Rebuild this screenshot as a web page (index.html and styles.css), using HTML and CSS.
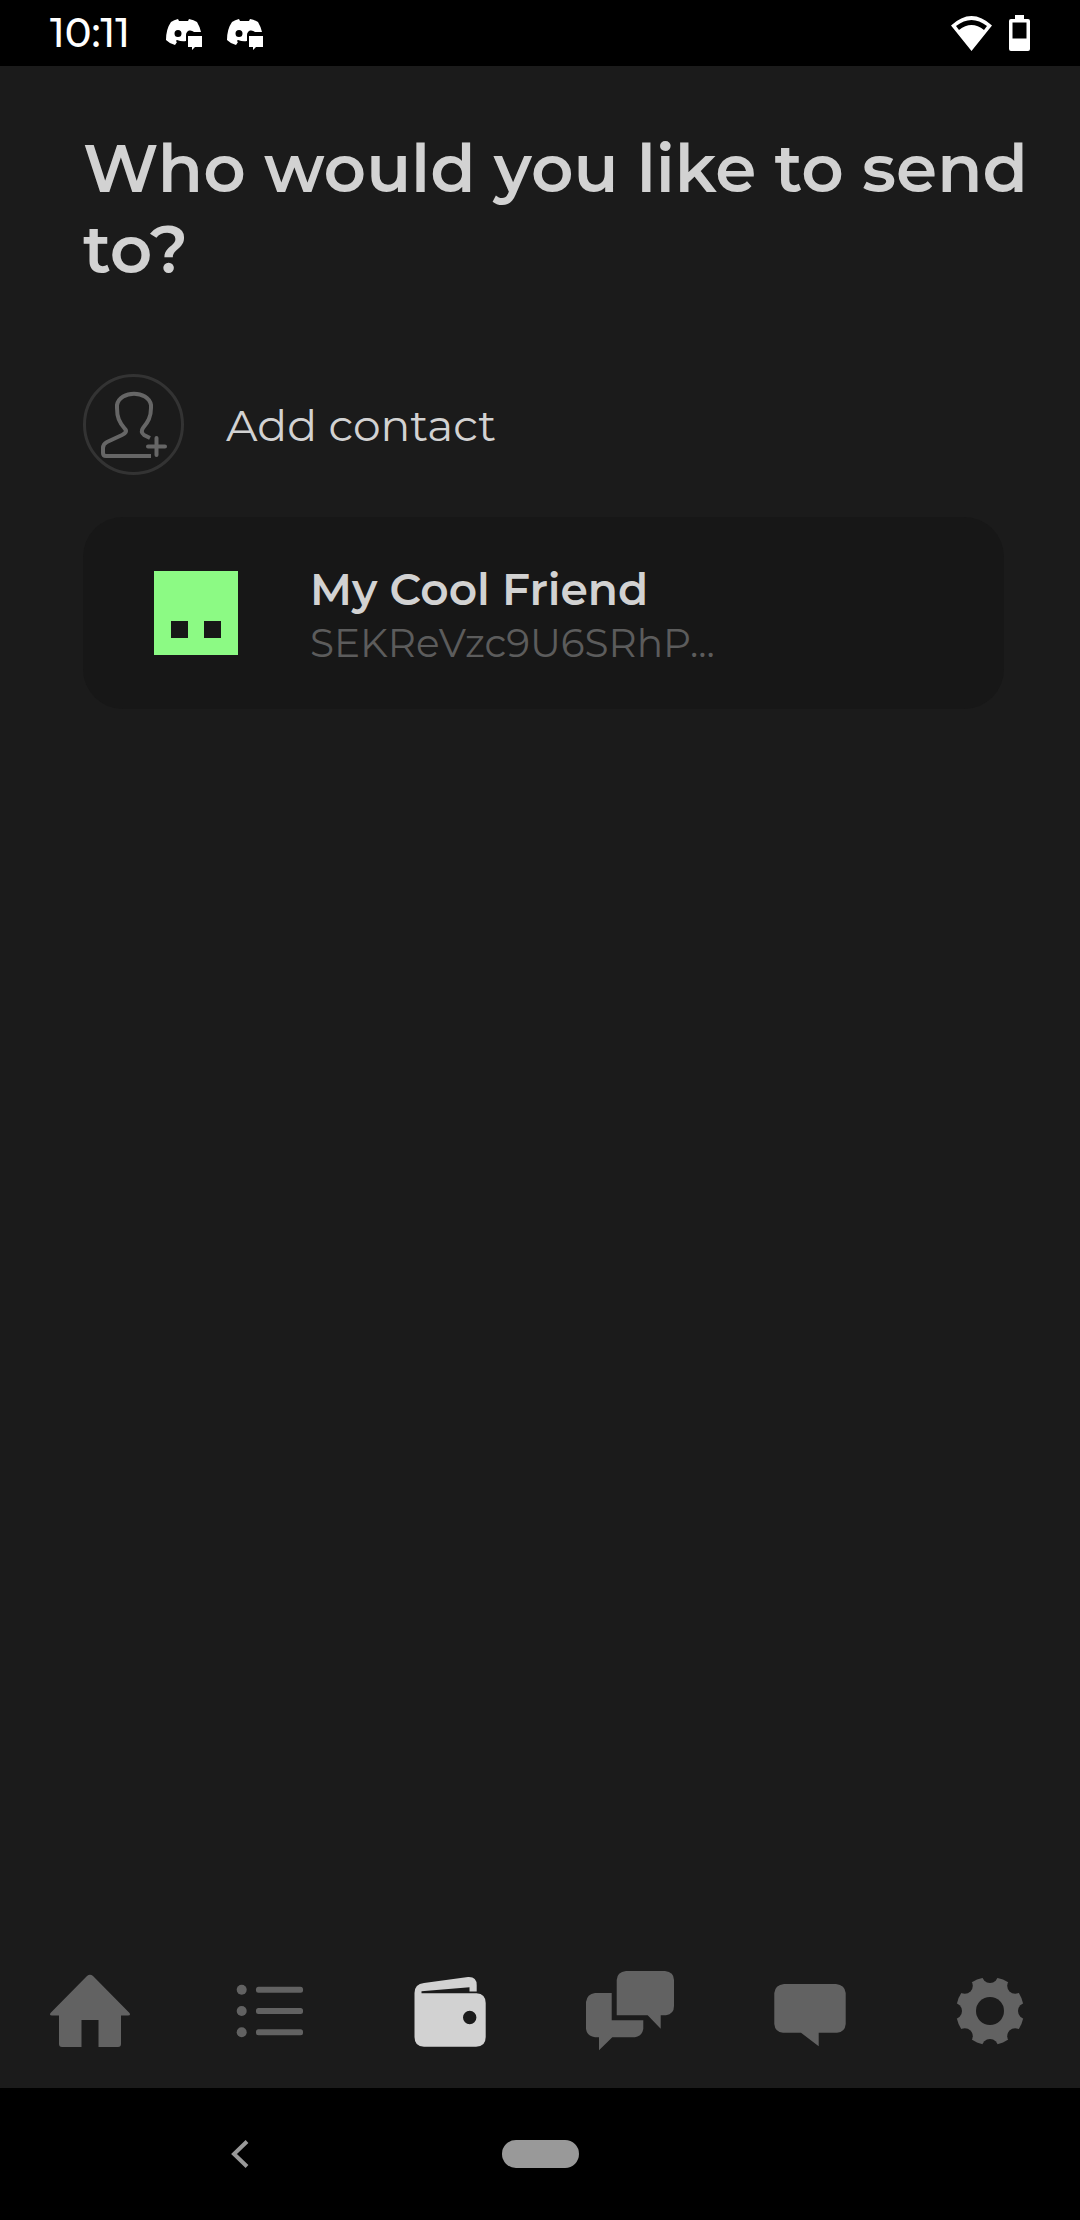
FILE: index.html
```html
<!DOCTYPE html>
<html lang="en">
<head>
<meta charset="utf-8">
<meta name="viewport" content="width=device-width, initial-scale=1">
<title>Send to contact</title>
<link rel="stylesheet" href="styles.css">
</head>
<body class="phone">
<header class="status">
  <div class="status-group">
    <time class="clock">10:11</time>
    <svg class="notice" viewBox="0 0 36 32" aria-hidden="true"><path fill="#fff" fill-rule="evenodd" d="M12 0L13 2H22L23 0Q28 1 31 3Q34 8 35 13H28Q26 11 23 11.500Q20 13 20 16V22Q16 23 11 21Q9 22 11 23L9 26Q4 25 0 21Q0 10 5 3Q8 1 12 0ZM12 11A3.500 3.500 0 1 0 12 18A3.500 3.500 0 1 0 12 11Z"/><path fill="#fff" d="M22 17H36V28H29L26 31V28H22Z"/></svg>
    <svg class="notice" viewBox="0 0 36 32" aria-hidden="true"><path fill="#fff" fill-rule="evenodd" d="M12 0L13 2H22L23 0Q28 1 31 3Q34 8 35 13H28Q26 11 23 11.500Q20 13 20 16V22Q16 23 11 21Q9 22 11 23L9 26Q4 25 0 21Q0 10 5 3Q8 1 12 0ZM12 11A3.500 3.500 0 1 0 12 18A3.500 3.500 0 1 0 12 11Z"/><path fill="#fff" d="M22 17H36V28H29L26 31V28H22Z"/></svg>
  </div>
  <div class="status-group status-right">
    <svg class="wifi" viewBox="0 0 41 35" aria-hidden="true"><path fill="#fff" fill-rule="evenodd" d="M0 9.500Q20.500 -9.500 41 9.500L20.500 35ZM5 10L8 14Q20.500 4 33 14L36 10Q20.500 -2 5 10Z"/></svg>
    <svg class="battery" viewBox="0 0 21 36" aria-hidden="true"><path fill="#fff" fill-rule="evenodd" d="M6 0H15V4H19Q21 4 21 6V34Q21 36 19 36H2Q0 36 0 34V6Q0 4 2 4H6ZM3.500 7.500V23.500H17.500V7.500Z"/></svg>
  </div>
</header>

<main class="content">
  <h1 class="title">Who would you like to send to?</h1>
  <button class="add" type="button">
    <span class="add-ring">
      <svg class="add-icon" viewBox="0 0 68 68" fill="none" stroke="#666" stroke-width="4" aria-hidden="true"><path d="M51 65H6Q3 65 3 62V57Q3 53 7 51L22 44Q28 41 25 38C19 31 17 26 17 17V14C20 -1 48 -1 51 14V17C51 26 48 31 43 37Q40 41 44 44L50 47"/><path stroke-linecap="round" d="M56.500 47V64M48 55.500H65"/></svg>
    </span>
    <span>Add contact</span>
  </button>
  <button class="card" type="button">
    <svg class="avatar" viewBox="0 0 84 84" aria-hidden="true"><path fill="#8cfa84" fill-rule="evenodd" d="M0 0H84V84H0ZM17 50V67H34V50ZM50 50V67H67V50Z"/></svg>
    <span class="person">
      <span class="name">My Cool Friend</span>
      <span class="key">SEKReVzc9U6SRhP...</span>
    </span>
  </button>
</main>

<nav class="tabs" aria-label="Main">
  <a class="tab" href="#home" aria-label="Home"><svg class="tab-icon" viewBox="0 0 120 100"><path d="M57 15Q60 12.500 63 15L99.500 52Q101 54.500 98 54.500H91V83Q91 86 88 86H68.500V59H51.500V86H32Q29 86 29 83V54.500H22Q19 54.500 20.500 52Z"/></svg></a>
  <a class="tab" href="#list" aria-label="Transactions"><svg class="tab-icon" viewBox="0 0 120 100"><circle cx="31.700" cy="28.700" r="5"/><circle cx="31.700" cy="50" r="5"/><circle cx="31.700" cy="71.300" r="5"/><rect x="46" y="25.700" width="47" height="6" rx="2.500"/><rect x="46" y="47" width="47" height="6" rx="2.500"/><rect x="46" y="68.300" width="47" height="6" rx="2.500"/></svg></a>
  <a class="tab tab-active" href="#wallet" aria-label="Wallet" aria-current="page"><svg class="tab-icon" viewBox="0 0 120 100"><path fill-rule="evenodd" d="M24.500 32Q24.500 23 34 22L78 16Q86.700 15.500 86.700 24V30.500H79.500V26.200L31.500 30.200V32.300H86.500Q95.700 33 95.700 42V76Q95.700 85.700 86 85.700H34Q24.500 85.700 24.500 76ZM79.700 49.800A6.700 6.700 0 1 0 79.700 63.200A6.700 6.700 0 1 0 79.700 49.800Z"/></svg></a>
  <a class="tab" href="#groups" aria-label="Groups"><svg class="tab-icon" viewBox="0 0 120 100"><path d="M56 10H95Q104 11 104 19V45Q104 53 96 54.300H90.700V67.700L77.700 54.300H46.700V19Q47 11 56 10ZM25 32H41.700V59.300H73.300V68Q72 75 65 76.300H42.300L29 89.300V76.300H25Q17 75 16 68V41Q17 33 25 32Z"/></svg></a>
  <a class="tab" href="#messages" aria-label="Messages"><svg class="tab-icon" viewBox="0 0 120 100"><path d="M34 23H86Q95 24 95.700 32V63Q95 71 87 71.700H68.700V85.300L51 71.700H33Q25 71 24.300 63V32Q25 24 34 23Z"/></svg></a>
  <a class="tab" href="#settings" aria-label="Settings"><svg class="tab-icon" viewBox="0 0 120 100"><mask id="gear"><rect width="120" height="100" fill="#fff"/><g fill="#000"><circle cx="60" cy="50" r="14"/><circle cx="60" cy="14" r="8"/><circle cx="60" cy="86" r="8"/><circle cx="24" cy="50" r="8"/><circle cx="96" cy="50" r="8"/><circle cx="34.800" cy="24.800" r="8"/><circle cx="85.200" cy="24.800" r="8"/><circle cx="34.800" cy="75.200" r="8"/><circle cx="85.200" cy="75.200" r="8"/></g></mask><circle cx="60" cy="50" r="34" mask="url(#gear)"/></svg></a>
</nav>

<footer class="system">
  <button class="system-button" type="button" aria-label="Back"><svg class="back" viewBox="0 0 18 28" fill="none" stroke="#999" stroke-width="4" aria-hidden="true"><path d="M16 1.500L3 14L16 26.500"/></svg></button>
  <button class="system-button" type="button" aria-label="Home screen"><span class="pill"></span></button>
</footer>
</body>
</html>
```

FILE: styles.css
```css
* {
  box-sizing: border-box;
}

.phone {
  display: flex;
  flex-direction: column;
  min-height: 100vh;
  margin: 0;
  background: #1b1b1b;
  color: #d2d2d2;
  font-family: Montserrat, Inter, "Open Sans", sans-serif;
}

button {
  padding: 0;
  border: 0;
  background: none;
  color: inherit;
  font: inherit;
  text-align: left;
}

svg {
  display: block;
}

.status {
  display: flex;
  justify-content: space-between;
  height: 66px;
  padding: 0 50px;
  background: #000;
  color: #fff;
}

.status-group {
  display: flex;
  align-items: center;
  gap: 25px;
}

.status-right {
  gap: 17px;
}

.clock {
  width: 91px;
  font-size: 40px;
  font-weight: 500;
  line-height: 66px;
}

.notice {
  width: 36px;
  height: 32px;
  margin-top: 4px;
}

.wifi {
  width: 41px;
  height: 35px;
}

.battery {
  width: 21px;
  height: 36px;
}

.content {
  flex: 1;
  display: flex;
  flex-direction: column;
  align-items: flex-start;
  padding: 62px 40px 40px 83px;
}

.title {
  margin: 0 0 84px;
  font-size: 66px;
  font-weight: 600;
  line-height: 81px;
}

.add {
  display: flex;
  align-items: center;
  gap: 42px;
  margin-bottom: 42px;
  font-size: 44px;
}

.add-ring {
  display: flex;
  align-items: center;
  justify-content: center;
  width: 101px;
  height: 101px;
  border: 3px solid #333;
  border-radius: 50%;
}

.add-icon {
  width: 68px;
  height: 68px;
}

.card {
  display: flex;
  align-items: center;
  gap: 72px;
  align-self: stretch;
  height: 192px;
  margin-right: 36px;
  padding: 0 71px;
  border-radius: 40px;
  background: #171717;
}

.avatar {
  width: 84px;
  height: 84px;
}

.person {
  display: flex;
  flex-direction: column;
  padding-top: 6px;
}

.name {
  font-size: 44px;
  font-weight: 600;
  line-height: 54px;
}

.key {
  color: #5c5c5c;
  font-size: 39px;
  line-height: 54px;
}

.tabs {
  display: grid;
  grid-template-columns: repeat(6, 1fr);
  height: 154px;
}

.tab {
  display: flex;
  align-items: center;
  justify-content: center;
  fill: #626262;
}

.tab-active {
  fill: #d2d2d2;
}

.tab-icon {
  width: 120px;
  height: 100px;
}

.system {
  display: grid;
  grid-template-columns: 4fr 1fr 4fr;
  height: 132px;
  background: #000;
}

.system-button {
  display: flex;
  align-items: center;
  justify-content: center;
}

.back {
  width: 18px;
  height: 28px;
}

.pill {
  width: 77px;
  height: 28px;
  border-radius: 14px;
  background: #999;
}
```
